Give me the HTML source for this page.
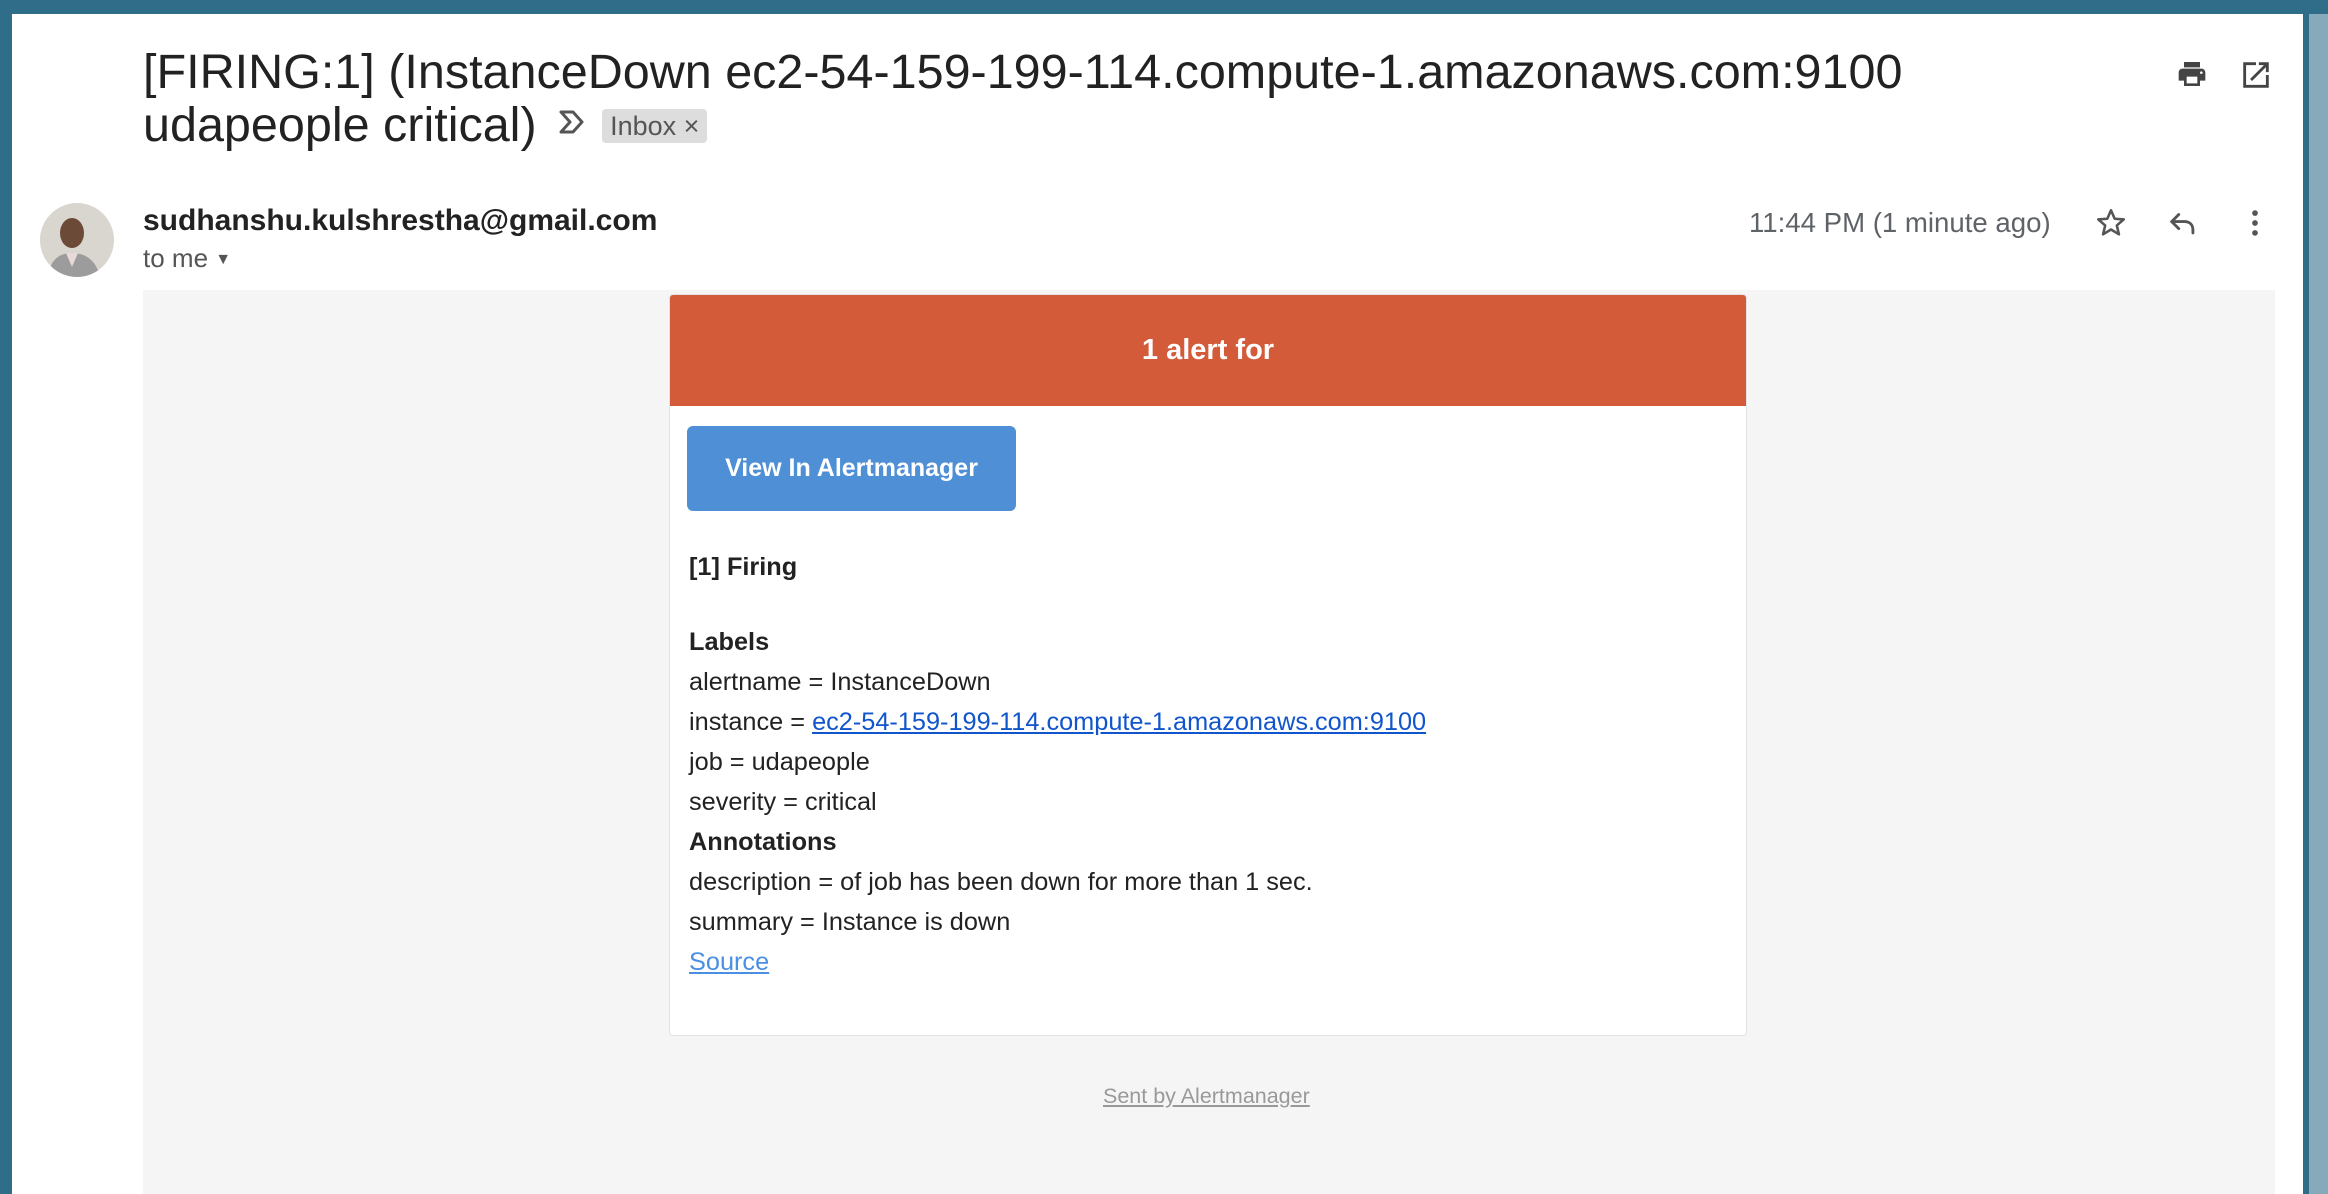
<!DOCTYPE html>
<html><head><meta charset="utf-8"><style>
*{margin:0;padding:0;box-sizing:border-box}
body{width:2328px;height:1194px;overflow:hidden;background:#2f6d88;font-family:"Liberation Sans",sans-serif;position:relative}
.win{position:absolute;left:12px;top:14px;width:2291px;height:1180px;background:#fff}
.sb{position:absolute;left:2303px;top:14px;width:25px;height:1180px;background:#86aabb;border-left:6px solid #2f6d88}
.abs{position:absolute;white-space:nowrap}
.title{left:143px;top:46px;font-size:48.5px;line-height:53px;color:#222}
.tag{display:inline-block;background:#ddd;color:#555;font-size:27px;line-height:34px;padding:0 8px;border-radius:4px;vertical-align:6px;margin-left:14px}
.grey{position:absolute;left:143px;top:290px;width:2132px;height:904px;background:#f5f5f5}
.card{position:absolute;left:669px;top:294px;width:1078px;height:742px;background:#fff;border:1px solid #e2e2e2;border-radius:4px;overflow:hidden}
.hdr{height:111px;background:#d35b3a;color:#fff;font-weight:bold;font-size:29px;text-align:center;line-height:111px}
.btn{position:absolute;left:17px;top:131px;width:329px;height:85px;background:#4f8fd5;border-radius:6px;color:#fff;font-weight:bold;font-size:25px;line-height:85px;text-align:center}
.body{position:absolute;left:19px;top:0;font-size:25.3px;color:#222;line-height:40px}
.body b{font-weight:bold}
a{color:#1155cc}
</style></head><body>
<div class="win"></div>
<div class="sb"></div>
<div class="abs title">[FIRING:1] (InstanceDown ec2-54-159-199-114.compute-1.amazonaws.com:9100<br>udapeople critical) <svg width="32" height="30" viewBox="0 0 32 30" style="vertical-align:4px;margin-left:6px"><path d="M5 5h12l9 10-9 10H5l9-10z" fill="none" stroke="#555" stroke-width="3" stroke-linejoin="round"/></svg><span class="tag">Inbox ×</span></div>
<svg class="abs" style="left:2175px;top:58px" width="34" height="32" viewBox="0 0 24 24"><path d="M19 8H5c-1.7 0-3 1.3-3 3v6h4v4h12v-4h4v-6c0-1.7-1.3-3-3-3zm-3 11H8v-5h8v5zm3-7c-.6 0-1-.4-1-1s.4-1 1-1 1 .4 1 1-.4 1-1 1zm-1-9H6v4h12V3z" fill="#444"/></svg>
<svg class="abs" style="left:2239px;top:58px" width="34" height="34" viewBox="0 0 24 24"><path d="M19 19H5V5h7V3H3v18h18v-9h-2v7zM14 3v2h3.6l-9.8 9.8 1.4 1.4L19 6.4V10h2V3h-7z" fill="#444"/></svg>
<svg class="abs" style="left:40px;top:203px" width="74" height="74" viewBox="0 0 74 74"><defs><clipPath id="c"><circle cx="37" cy="37" r="37"/></clipPath></defs><g clip-path="url(#c)"><rect width="74" height="74" fill="#d9d6cf"/><ellipse cx="32" cy="30" rx="12" ry="15" fill="#6b4a38"/><path d="M8 74c2-18 12-24 24-24s24 6 28 24z" fill="#9c9c9c"/><path d="M26 50l6 14 6-14z" fill="#e8d8d8"/></g></svg>
<div class="abs" style="left:143px;top:204px;font-size:30px;font-weight:bold;color:#222">sudhanshu.kulshrestha@gmail.com</div>
<div class="abs" style="left:143px;top:243px;font-size:26px;color:#555">to me <span style="font-size:16px;vertical-align:3px">▼</span></div>
<div class="abs" style="left:1749px;top:207px;font-size:27.6px;color:#5f6368">11:44 PM (1 minute ago)</div>
<svg class="abs" style="left:2094px;top:206px" width="34" height="34" viewBox="0 0 24 24"><path d="M12 3l2.6 6 6.4.5-4.9 4.2 1.5 6.3L12 16.6 6.4 20l1.5-6.3L3 9.5 9.4 9z" fill="none" stroke="#555" stroke-width="1.8" stroke-linejoin="round"/></svg>
<svg class="abs" style="left:2166px;top:206px" width="34" height="34" viewBox="0 0 24 24"><path d="M9 6L4 11l5 5M4 11h9c4 0 6 2.5 6 6v2" fill="none" stroke="#555" stroke-width="2" stroke-linejoin="round" stroke-linecap="round"/></svg>
<svg class="abs" style="left:2238px;top:206px" width="34" height="34" viewBox="0 0 24 24"><circle cx="12" cy="5" r="2" fill="#555"/><circle cx="12" cy="12" r="2" fill="#555"/><circle cx="12" cy="19" r="2" fill="#555"/></svg>
<div class="grey"></div>
<div class="card">
<div class="hdr">1 alert for</div>
<div class="btn">View In Alertmanager</div>
<div class="body" style="top:252px"><b>[1] Firing</b></div>
<div class="body" style="top:327px">
<b>Labels</b><br>alertname = InstanceDown<br>instance = <a href="#">ec2-54-159-199-114.compute-1.amazonaws.com:9100</a><br>job = udapeople<br>severity = critical<br><b>Annotations</b><br>description = of job has been down for more than 1 sec.<br>summary = Instance is down<br><a href="#" style="color:#4a90e2">Source</a>
</div>
</div>
<div class="abs" style="left:1103px;top:1084px;font-size:21.5px;color:#999;text-decoration:underline">Sent by Alertmanager</div>
</body></html>
